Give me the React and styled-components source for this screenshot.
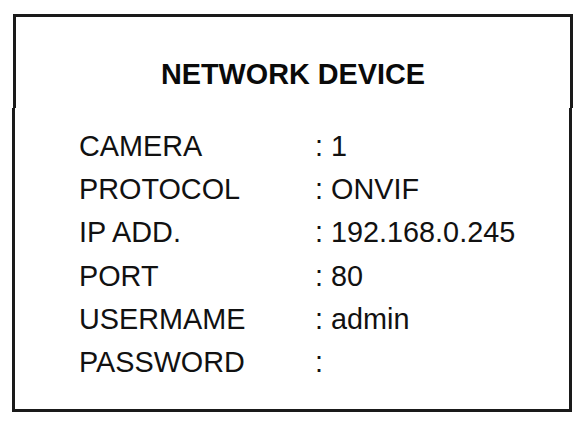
import React from 'react'
import styled, { createGlobalStyle } from 'styled-components'

const Global = createGlobalStyle`
  html, body {
    margin: 0;
    padding: 0;
    background: #fff;
  }
  body {
    font-family: "Liberation Sans", Arial, sans-serif;
    color: #111;
  }
`

const Page = styled.div`
  padding-top: 14px;
  width: 585px;
`

const Header = styled.div`
  margin-left: 13px;
  width: 554px;
  border: 3px solid #1a1a1a;
  border-bottom: none;
  padding: 41px 0 17px;
  text-align: center;
`

const Title = styled.h1`
  margin: 0;
  font-size: 28.8px;
  line-height: 33px;
  font-weight: bold;
  color: #0a0a0a;
`

const Body = styled.div`
  margin-left: 12px;
  width: 490px;
  border: 3px solid #1a1a1a;
  border-top: none;
  padding: 17px 0 25px 64px;
`

const Row = styled.div`
  display: grid;
  grid-template-columns: 236px 1fr;
  font-size: 28.8px;
  line-height: 43.2px;
`

const Value = styled.span`
  white-space: pre;
`

const rows = [
  ['CAMERA', '1'],
  ['PROTOCOL', 'ONVIF'],
  ['IP ADD.', '192.168.0.245'],
  ['PORT', '80'],
  ['USERMAME', 'admin'],
  ['PASSWORD', ''],
]

const App = () => (
  <>
    <Global />
    <Page>
      <Header>
        <Title>NETWORK DEVICE</Title>
      </Header>
      <Body>
        {rows.map(([label, value]) => (
          <Row key={label}>
            <span>{label}</span>
            <Value>: {value}</Value>
          </Row>
        ))}
      </Body>
    </Page>
  </>
)

export default App
